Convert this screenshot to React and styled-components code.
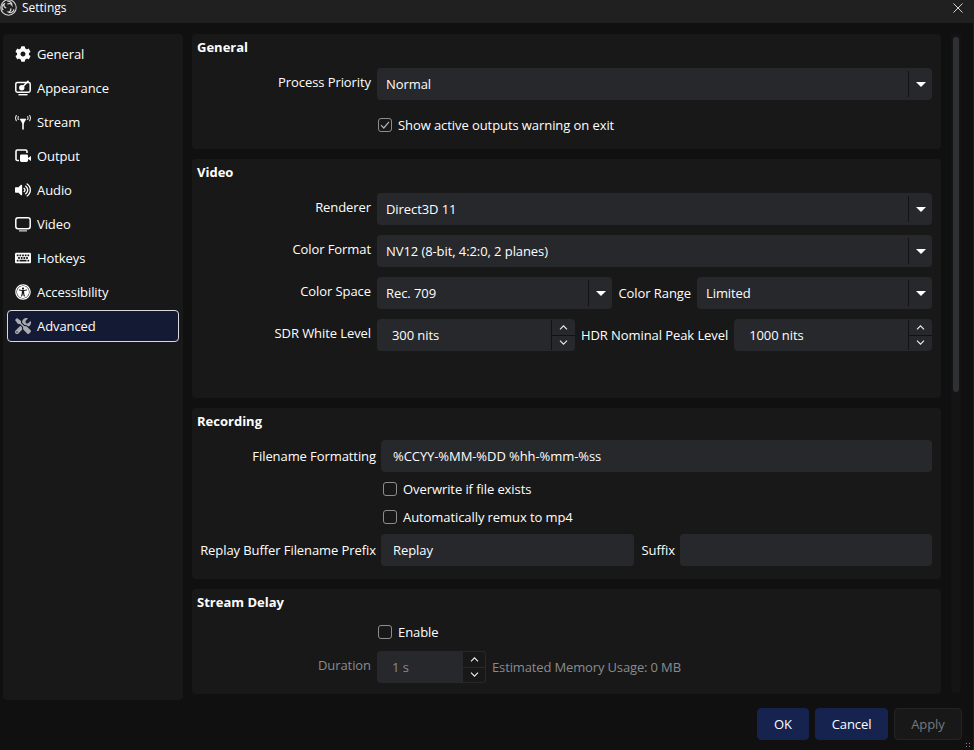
import styled, { createGlobalStyle } from 'styled-components';
import { FaCog, FaVolumeUp, FaKeyboard, FaUniversalAccess, FaTools } from 'react-icons/fa';

const Global = createGlobalStyle`
  html, body { margin: 0; padding: 0; background: #101010; }
  * { box-sizing: border-box; }
`;

const Window = styled.div`
  width: 974px;
  height: 750px;
  display: flex;
  flex-direction: column;
  position: relative;
  overflow: hidden;
  background: #101010;
  border-right: 1px solid #1f1f1f;
  color: #fefefe;
  font-family: "Open Sans", sans-serif;
  font-size: 13px;
  letter-spacing: -0.08px;
`;

const TitleBar = styled.div`
  height: 23px;
  flex: none;
  background: #202020;
  display: flex;
  align-items: center;
  gap: 5px;
  padding: 0 10px 0 0;
  font-size: 12px;
  letter-spacing: 0;
`;

const TitleText = styled.span`
  flex: 1;
  margin-top: -8px;
  line-height: 16px;
`;

const LogoMark = styled.svg`
  width: 17px;
  height: 17px;
  flex: none;
  margin-top: -8px;
`;

const CloseMark = styled.svg`
  width: 10px;
  height: 10px;
  flex: none;
  margin-top: -8px;
`;

const Body = styled.div`
  flex: 1;
  min-height: 0;
  display: flex;
  padding: 11px 12px 0 3px;
`;

const Sidebar = styled.nav`
  width: 180px;
  height: 666px;
  flex: none;
  background: #181818;
  border-radius: 4px;
  padding: 4px;
  display: flex;
  flex-direction: column;
  gap: 2px;
  margin-right: 9px;
`;

const NavItem = styled.div`
  height: 32px;
  display: flex;
  align-items: center;
  gap: 6px;
  padding-left: 7px;
  border-radius: 4px;
  border: 1px solid ${p => (p.$active ? '#d8dae0' : 'transparent')};
  background: ${p => (p.$active ? '#141a33' : 'transparent')};
  color: #fefefe;
  & > svg {
    flex: none;
    width: 16px;
    height: 16px;
    color: ${p => (p.$active ? '#a9abb1' : '#fefefe')};
  }
`;

const Panels = styled.main`
  width: 749px;
  height: 660px;
  flex: none;
  overflow: hidden;
  display: flex;
  flex-direction: column;
  gap: 10px;
`;

const Group = styled.section`
  height: ${p => p.$h}px;
  flex: none;
  background: #181818;
  border-radius: 4px;
  padding: 4px 9px 0 5px;
  display: flex;
  flex-direction: column;
`;

const GroupTitle = styled.h2`
  margin: 0;
  height: 18px;
  line-height: 18px;
  font-size: 13px;
  font-weight: 700;
  letter-spacing: 0;
  color: #fefefe;
`;

const Row = styled.div`
  display: flex;
  align-items: center;
  gap: ${p => p.$gap ?? 6}px;
  height: 32px;
  margin-top: ${p => p.$mt ?? 10}px;
`;

const Label = styled.label`
  flex: none;
  width: ${p => (p.$w ? `${p.$w}px` : 'auto')};
  text-align: right;
  white-space: nowrap;
  margin-top: ${p => (p.$raised ? -4 : 0)}px;
  margin-left: ${p => p.$ml ?? 0}px;
  color: ${p => (p.$dim ? '#8a8b8f' : '#fefefe')};
`;

const Field = styled.div`
  height: 32px;
  flex: ${p => (p.$w ? `0 0 ${p.$w}px` : '1')};
  min-width: 0;
  display: flex;
  align-items: center;
  background: #27282c;
  border-radius: 4px;
  padding-left: ${p => p.$pad ?? 9}px;
  color: ${p => (p.$dim ? '#8a8b8f' : '#fefefe')};
`;

const FieldValue = styled.span`
  flex: 1;
  white-space: nowrap;
`;

const Arrow = styled.div`
  width: 24px;
  height: 26px;
  flex: none;
  display: flex;
  align-items: center;
  justify-content: center;
  border-left: 1px solid #121212;
  &::after {
    content: '';
    border-left: 5px solid transparent;
    border-right: 5px solid transparent;
    border-top: 5px solid #fefefe;
  }
`;

const Steppers = styled.div`
  width: 24px;
  height: 32px;
  flex: none;
  padding: ${p => (p.$dim ? 0 : '1px 0')};
  display: flex;
  flex-direction: column;
  background: ${p => (p.$dim ? '#181818' : 'transparent')};
  border: ${p => (p.$dim ? '1px solid #27282c' : 'none')};
  border-left: none;
  border-radius: 0 4px 4px 0;
`;

const Step = styled.div`
  flex: 1;
  display: flex;
  align-items: center;
  justify-content: center;
  border-left: 1px solid ${p => (p.$dim ? '#27282c' : '#121212')};
  &:first-child { border-bottom: 1px solid ${p => (p.$dim ? '#27282c' : '#121212')}; }
`;

const CheckRow = styled.div`
  display: flex;
  align-items: center;
  gap: 6px;
  height: 20px;
  margin-top: ${p => p.$mt}px;
  margin-left: ${p => p.$ml}px;
`;

const Box = styled.span`
  width: 14px;
  height: 14px;
  flex: none;
  border: 1px solid #8d8d8f;
  border-radius: 3px;
  display: flex;
  align-items: center;
  justify-content: center;
`;

const Hint = styled.span`
  color: #8a8b8f;
  letter-spacing: -0.14px;
`;

const ScrollTrack = styled.div`
  width: 10px;
  height: 659px;
  flex: none;
  margin-left: 10px;
  background: #141414;
  border-radius: 4px;
  padding: 3px 2px;
`;

const ScrollThumb = styled.div`
  height: 355px;
  background: #2f3034;
  border-radius: 3px;
`;

const Footer = styled.footer`
  height: 50px;
  flex: none;
  display: flex;
  justify-content: flex-end;
  align-items: flex-start;
  gap: 6px;
  padding: 8px 11px 0 0;
`;

const Button = styled.button`
  width: ${p => p.$w}px;
  height: 32px;
  border-radius: 4px;
  font: inherit;
  letter-spacing: inherit;
  padding: 0;
  border: 1px solid ${p => (p.disabled ? '#242424' : '#16234f')};
  background: ${p => (p.disabled ? '#181818' : '#16234f')};
  color: ${p => (p.disabled ? '#77787c' : '#fefefe')};
`;

const Grip = styled.div`
  position: absolute;
  right: 1px;
  bottom: 1px;
  width: 7px;
  height: 7px;
  background-image: radial-gradient(#8a8a8a 0.7px, transparent 0.8px);
  background-size: 3px 3px;
`;

const ObsLogo = () => (
  <LogoMark viewBox="0 0 18 18" fill="none">
    <circle cx="9" cy="9" r="8.2" stroke="#d8d8d8" strokeWidth="1.1" />
    <path d="M7.6 2.4a4 4 0 0 1 5 3.9 3 3 0 0 0-4.7-.7" stroke="#d8d8d8" strokeWidth="1.3" />
    <path d="M14.8 11a4 4 0 0 1-6 2.8 3 3 0 0 0 2.6-3.8" stroke="#d8d8d8" strokeWidth="1.3" />
    <path d="M3.4 11.8a4 4 0 0 1 1.1-6.6 3 3 0 0 0 2.1 4.3" stroke="#d8d8d8" strokeWidth="1.3" />
  </LogoMark>
);

const AppearanceIcon = () => (
  <svg viewBox="0 0 16 16" fill="none">
    <rect x="0.8" y="2.5" width="14.4" height="9.7" rx="1.6" stroke="currentColor" strokeWidth="1.5" />
    <path d="M3.5 14.7h9" stroke="currentColor" strokeWidth="1.4" />
    <circle cx="6.8" cy="7.8" r="2.7" fill="currentColor" />
    <path d="M8 6.5 13.5.8" stroke="currentColor" strokeWidth="1.5" />
  </svg>
);

const StreamIcon = () => (
  <svg viewBox="0 0 16 16" fill="none" stroke="currentColor">
    <path d="M8 7 8 15.5" strokeWidth="1.6" />
    <path d="M5 5h6L8 10z" fill="currentColor" strokeWidth="0.6" />
    <path d="M3.4 2.2a4 4 0 0 0 0 3.8M1.4 1a6 6 0 0 0 0 6.2M12.6 2.2a4 4 0 0 1 0 3.8M14.6 1a6 6 0 0 1 0 6.2" strokeWidth="1" />
  </svg>
);

const OutputIcon = () => (
  <svg viewBox="0 0 16 16" fill="none">
    <path d="M4 12.5H2.4A1.4 1.4 0 0 1 1 11V3.4A1.4 1.4 0 0 1 2.4 2h8A1.4 1.4 0 0 1 12 3.4V5" stroke="currentColor" strokeWidth="1.6" />
    <rect x="5" y="6.4" width="8" height="7.6" rx="1.4" fill="currentColor" />
    <path d="M13 10l3-2v5l-3-2z" fill="currentColor" />
  </svg>
);

const VideoIcon = () => (
  <svg viewBox="0 0 16 16" fill="none">
    <rect x="0.8" y="1.8" width="14.4" height="11" rx="2.2" stroke="currentColor" strokeWidth="1.5" />
    <path d="M4 14.9h8" stroke="currentColor" strokeWidth="1" />
  </svg>
);

const Check = () => (
  <svg width="10" height="10" viewBox="0 0 10 10" fill="none">
    <path d="M1 5.2 3.8 8 9 1.8" stroke="#b4b4b4" strokeWidth="1.2" />
  </svg>
);

const Chevron = ({ up }) => (
  <svg width="9" height="5" viewBox="0 0 10 6" fill="none">
    <path d={up ? 'M.8 5.2 5 1l4.2 4.2' : 'M.8.8 5 5 9.2.8'} stroke="#f0f0f0" strokeWidth="1.3" />
  </svg>
);

const Select = ({ value, w }) => (
  <Field $w={w}>
    <FieldValue>{value}</FieldValue>
    <Arrow />
  </Field>
);

const Spin = ({ value, w, dim }) => (
  <Field $w={w} $pad={15} $dim={dim}>
    <FieldValue>{value}</FieldValue>
    <Steppers $dim={dim}>
      <Step $dim={dim}><Chevron up /></Step>
      <Step $dim={dim}><Chevron /></Step>
    </Steppers>
  </Field>
);

const navItems = [
  ['General', <FaCog key="g" />],
  ['Appearance', <AppearanceIcon key="a" />],
  ['Stream', <StreamIcon key="s" />],
  ['Output', <OutputIcon key="o" />],
  ['Audio', <FaVolumeUp key="au" />],
  ['Video', <VideoIcon key="v" />],
  ['Hotkeys', <FaKeyboard key="h" />],
  ['Accessibility', <FaUniversalAccess key="ac" />],
  ['Advanced', <FaTools key="ad" />],
];

function App() {
  return (
    <Window>
      <Global />
      <TitleBar>
        <ObsLogo />
        <TitleText>Settings</TitleText>
        <CloseMark viewBox="0 0 11 11">
          <path d="M.5.5l10 10M10.5.5l-10 10" stroke="#e8e8e8" strokeWidth="1" />
        </CloseMark>
      </TitleBar>
      <Body>
        <Sidebar>
          {navItems.map(([name, icon]) => (
            <NavItem key={name} $active={name === 'Advanced'}>
              {icon}
              {name}
            </NavItem>
          ))}
        </Sidebar>
        <Panels>
          <Group $h={115}>
            <GroupTitle>General</GroupTitle>
            <Row $mt={12}>
              <Label $w={174} $raised>Process Priority</Label>
              <Select value="Normal" />
            </Row>
            <CheckRow $ml={181} $mt={15}>
              <Box><Check /></Box>
              Show active outputs warning on exit
            </CheckRow>
          </Group>
          <Group $h={239}>
            <GroupTitle>Video</GroupTitle>
            <Row $mt={12}>
              <Label $w={174} $raised>Renderer</Label>
              <Select value="Direct3D 11" />
            </Row>
            <Row>
              <Label $w={174} $raised>Color Format</Label>
              <Select value="NV12 (8-bit, 4:2:0, 2 planes)" />
            </Row>
            <Row>
              <Label $w={174} $raised>Color Space</Label>
              <Select value="Rec. 709" w={235} />
              <Label $w={73}>Color Range</Label>
              <Select value="Limited" />
            </Row>
            <Row>
              <Label $w={174} $raised>SDR White Level</Label>
              <Spin value="300 nits" w={198} />
              <Label>HDR Nominal Peak Level</Label>
              <Spin value="1000 nits" />
            </Row>
          </Group>
          <Group $h={171}>
            <GroupTitle>Recording</GroupTitle>
            <Row $mt={10} $gap={5}>
              <Label $w={179}>Filename Formatting</Label>
              <Field $pad={12}><FieldValue>%CCYY-%MM-%DD %hh-%mm-%ss</FieldValue></Field>
            </Row>
            <CheckRow $ml={186} $mt={7}>
              <Box />
              Overwrite if file exists
            </CheckRow>
            <CheckRow $ml={186} $mt={8}>
              <Box />
              Automatically remux to mp4
            </CheckRow>
            <Row $mt={7} $gap={5}>
              <Label $w={179}>Replay Buffer Filename Prefix</Label>
              <Field $w={253} $pad={12}><FieldValue>Replay</FieldValue></Field>
              <Label $w={35} $ml={1}>Suffix</Label>
              <Field />
            </Row>
          </Group>
          <Group $h={105}>
            <GroupTitle>Stream Delay</GroupTitle>
            <CheckRow $ml={181} $mt={11}>
              <Box />
              Enable
            </CheckRow>
            <Row $mt={9}>
              <Label $w={174} $dim $raised>Duration</Label>
              <Spin value="1 s" w={109} dim />
              <Hint>Estimated Memory Usage: 0 MB</Hint>
            </Row>
          </Group>
        </Panels>
        <ScrollTrack><ScrollThumb /></ScrollTrack>
      </Body>
      <Footer>
        <Button $w={52}>OK</Button>
        <Button $w={73}>Cancel</Button>
        <Button $w={68} disabled>Apply</Button>
      </Footer>
      <Grip />
    </Window>
  );
}

export default App;
